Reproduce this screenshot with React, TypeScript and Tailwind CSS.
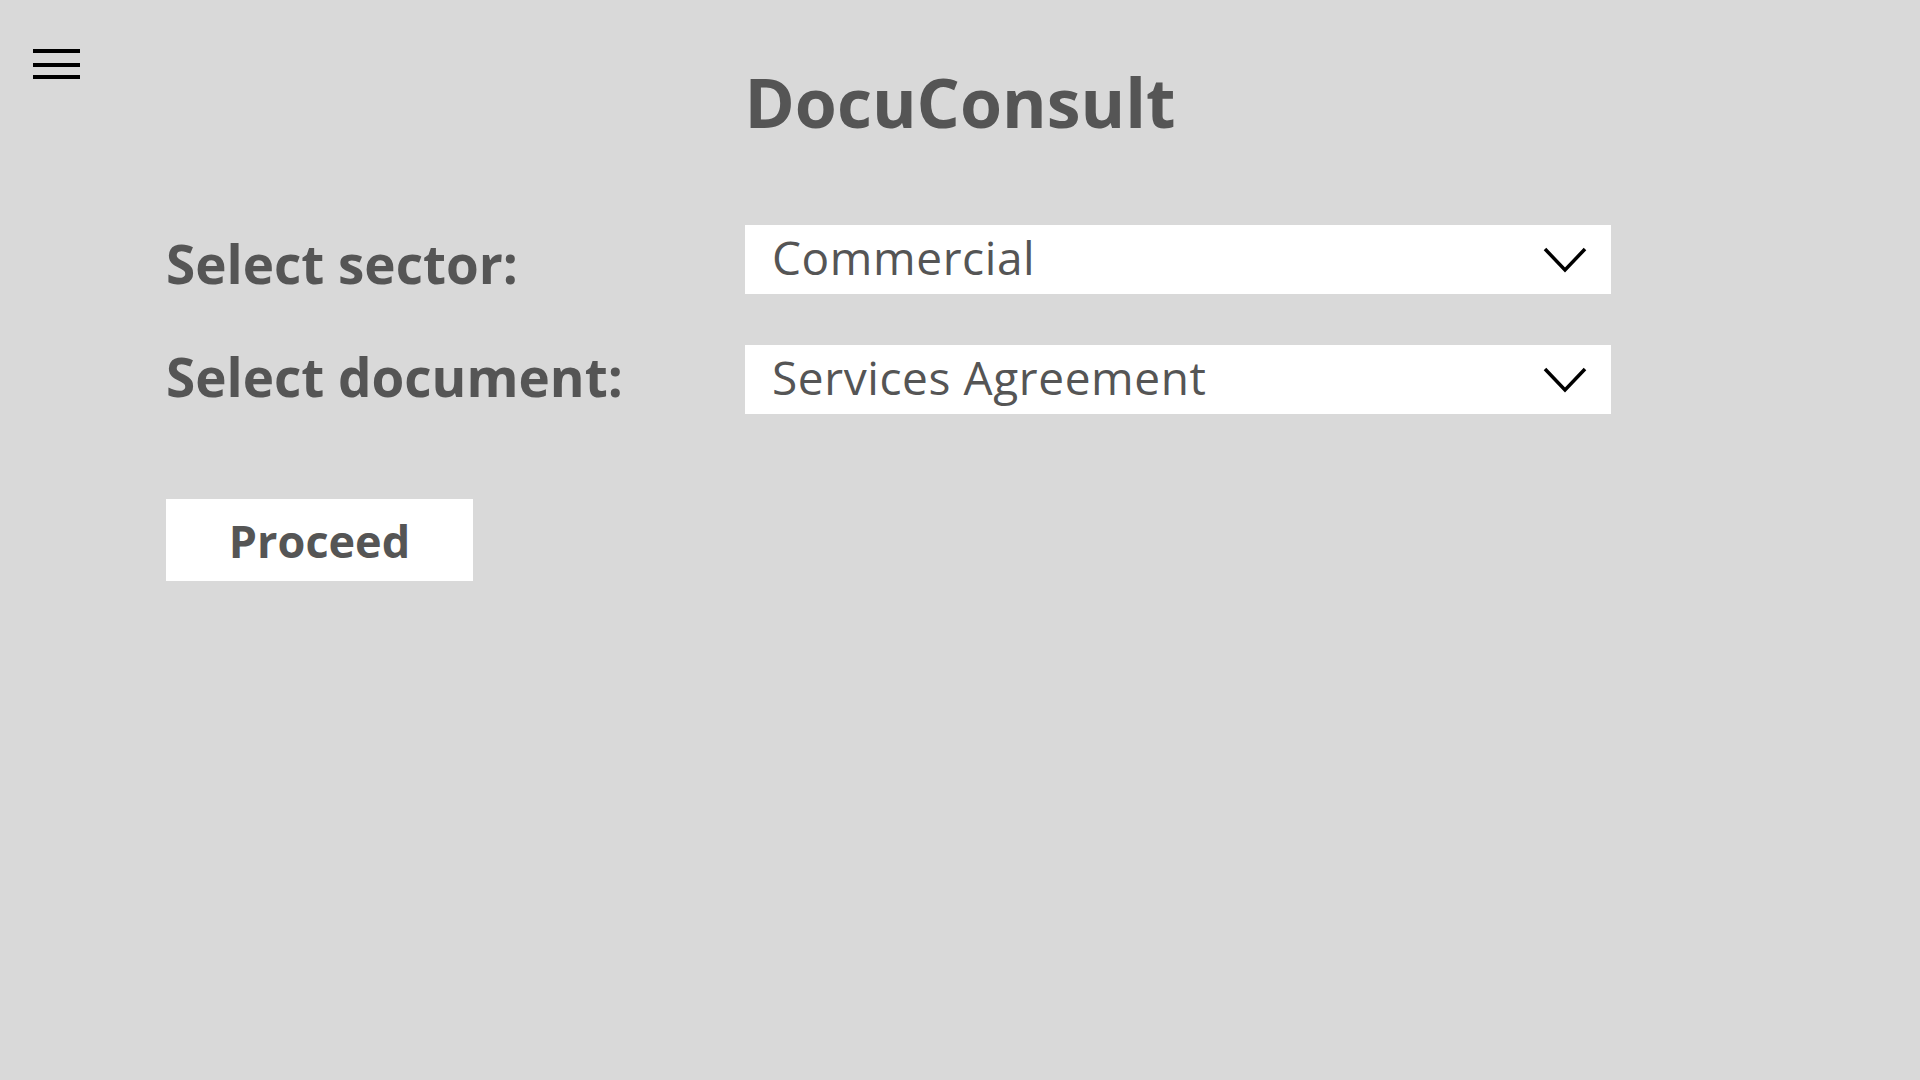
import React, { useState } from 'react';

const ChevronDown = () => (
  <svg width="44" height="26" viewBox="0 0 44 26" fill="none">
    <polyline points="2,2 22,23 42,2" stroke="#000" strokeWidth="3.5" strokeLinejoin="miter" />
  </svg>
);

const Hamburger = () => (
  <svg width="48" height="32" viewBox="0 0 48 32">
    <rect x="0" y="1" width="47" height="4" fill="#000" />
    <rect x="0" y="15" width="47" height="4" fill="#000" />
    <rect x="0" y="27" width="47" height="4" fill="#000" />
  </svg>
);

const Dropdown = ({ value }: { value: string }) => (
  <button className="flex h-[69px] w-[866px] items-center justify-between bg-white pl-[27px] pr-[24px] text-left">
    <span className="pb-[5px] text-[46px] leading-none tracking-[0.6px] text-[#555555]">{value}</span>
    <ChevronDown />
  </button>
);

const App = () => {
  const [sector] = useState('Commercial');
  const [doc] = useState('Services Agreement');

  return (
    <div className="min-h-screen w-full bg-[#d9d9d9] font-['Open_Sans',sans-serif]">
      <header className="grid grid-cols-[1fr_auto_1fr] items-start px-[33px] pt-[48px]">
        <button className="justify-self-start">
          <Hamburger />
        </button>
        <h1 className="mt-[20px] text-[68px] font-bold leading-none text-[#555555]">DocuConsult</h1>
        <div />
      </header>

      <main className="pl-[166px] pt-[89px]">
        <div className="grid grid-cols-[579px_866px] items-start gap-y-[51px]">
          <label className="mt-[12px] text-[53px] font-bold leading-none text-[#555555]">Select sector:</label>
          <Dropdown value={sector} />
          <label className="mt-[5px] text-[53px] font-bold leading-none text-[#555555]">Select document:</label>
          <Dropdown value={doc} />
        </div>

        <button className="mt-[85px] flex h-[82px] w-[307px] items-center justify-center bg-white text-[45px] font-bold leading-none text-[#555555]">
          Proceed
        </button>
      </main>
    </div>
  );
};

export default App;
